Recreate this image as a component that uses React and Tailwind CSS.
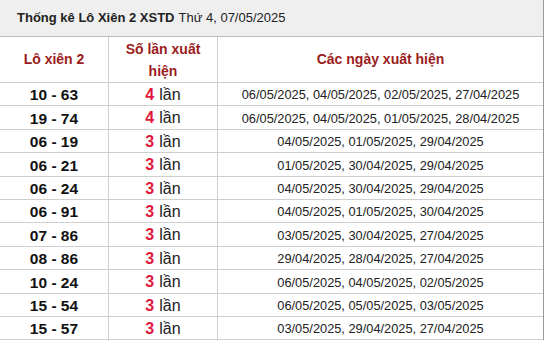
import React from 'react';

const ROWS = [
    { pair: '10 - 63', count: 4, dates: ['06/05/2025', '04/05/2025', '02/05/2025', '27/04/2025'] },
    { pair: '19 - 74', count: 4, dates: ['06/05/2025', '04/05/2025', '01/05/2025', '28/04/2025'] },
    { pair: '06 - 19', count: 3, dates: ['04/05/2025', '01/05/2025', '29/04/2025'] },
    { pair: '06 - 21', count: 3, dates: ['01/05/2025', '30/04/2025', '29/04/2025'] },
    { pair: '06 - 24', count: 3, dates: ['04/05/2025', '30/04/2025', '29/04/2025'] },
    { pair: '06 - 91', count: 3, dates: ['04/05/2025', '01/05/2025', '30/04/2025'] },
    { pair: '07 - 86', count: 3, dates: ['03/05/2025', '30/04/2025', '27/04/2025'] },
    { pair: '08 - 86', count: 3, dates: ['29/04/2025', '28/04/2025', '27/04/2025'] },
    { pair: '10 - 24', count: 3, dates: ['06/05/2025', '04/05/2025', '02/05/2025'] },
    { pair: '15 - 54', count: 3, dates: ['06/05/2025', '05/05/2025', '03/05/2025'] },
    { pair: '15 - 57', count: 3, dates: ['03/05/2025', '29/04/2025', '27/04/2025'] },
];

const COLS = 'grid grid-cols-[109px_109px_325px]';

function Row({ row }) {
    return (
        <div className={`${COLS} h-[23.4px] border-b border-[#cfcfcf]`}>
            <div className="flex items-center justify-center border-r border-[#cfcfcf] text-[15.5px] font-bold text-[#111]">
                {row.pair}
            </div>
            <div className="flex items-center justify-center border-r border-[#cfcfcf] text-[16px] text-[#222]">
                <span className="font-bold text-[#e0183c] mr-[5px]">{row.count}</span>lần
            </div>
            <div className="flex items-center justify-center text-[12.8px] text-[#222]">
                {row.dates.join(', ')}
            </div>
        </div>
    );
}

export default function App() {
    return (
        <div className="w-[545px] h-[341px] bg-white overflow-hidden font-['Liberation_Sans',Arial,sans-serif]">
            <div className="w-[544px] border-r border-[#9a9a9a]">
                <div className="h-[37px] bg-[#efefef] border-b border-[#bdbdbd] flex items-center pl-[17px] text-[13px] text-[#222]">
                    <span className="font-bold">Thống kê Lô Xiên 2 XSTD</span>
                    <span className="ml-[4px]">Thứ 4, 07/05/2025</span>
                </div>
                <div className={`${COLS} h-[46px] border-b border-[#cfcfcf] text-[14px] font-bold text-[#9b1c1c]`}>
                    <div className="flex items-center justify-center border-r border-[#cfcfcf]">Lô xiên 2</div>
                    <div className="flex items-center justify-center border-r border-[#cfcfcf] text-center leading-[22px] px-[8px]">
                        Số lần xuất hiện
                    </div>
                    <div className="flex items-center justify-center">Các ngày xuất hiện</div>
                </div>
                {ROWS.map(row => (
                    <Row key={row.pair} row={row} />
                ))}
            </div>
        </div>
    );
}
